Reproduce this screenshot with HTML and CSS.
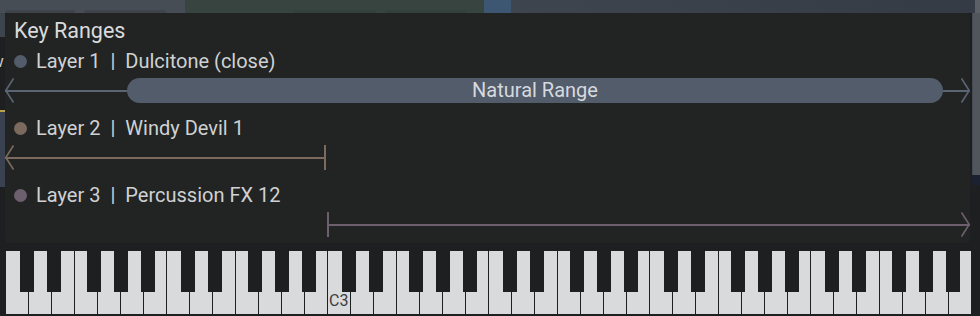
FILE: index.html
```html
<!DOCTYPE html>
<html lang="en">
<head>
    <meta charset="UTF-8" />
    <title>Key Ranges</title>
    <link rel="stylesheet" href="styles.css">
</head>
<body>
    <div class="screen">
        <div class="toolbar">
            <div class="tb tb-grey"><span class="tab tab-a"></span><span class="tab tab-b"></span></div>
            <div class="tb tb-green"><span class="tab tab-c"></span><span class="tab tab-b"></span></div>
            <div class="tb tb-blue"></div>
            <div class="tb tb-slate"></div>
            <div class="tb tb-edge"></div>
        </div>

        <div class="middle">
            <div class="side-left">
                <div class="sl-top"></div>
                <div class="sl-mid">w</div>
                <div class="sl-knob"></div>
            </div>

            <div class="key-ranges">
                <div class="title">Key Ranges</div>

                <!-- Layer 1 -->
                <div class="layer layer-1">
                    <div class="layer-head">
                        <span class="dot"></span>
                        <span>Layer 1</span><span class="sep">|</span><span>Dulcitone (close)</span>
                    </div>
                    <div class="track">
                        <div class="seg seg-l1">
                            <svg class="chev" width="9" height="25" viewBox="0 0 9 25"><polyline points="8.5,0.5 0.8,12.5 8.5,24.5" /></svg>
                        </div>
                        <div class="pill">Natural Range</div>
                        <div class="seg seg-r1">
                            <svg class="chev chev-r" width="9" height="25" viewBox="0 0 9 25"><polyline points="0.5,0.5 8.2,12.5 0.5,24.5" /></svg>
                        </div>
                    </div>
                </div>

                <!-- Layer 2 -->
                <div class="layer layer-2">
                    <div class="layer-head">
                        <span class="dot"></span>
                        <span>Layer 2</span><span class="sep">|</span><span>Windy Devil 1</span>
                    </div>
                    <div class="track">
                        <div class="seg seg-l2">
                            <svg class="chev" width="9" height="25" viewBox="0 0 9 25"><polyline points="8.5,0.5 0.8,12.5 8.5,24.5" /></svg>
                            <span class="bar bar-end"></span>
                        </div>
                    </div>
                </div>

                <!-- Layer 3 -->
                <div class="layer layer-3">
                    <div class="layer-head">
                        <span class="dot"></span>
                        <span>Layer 3</span><span class="sep">|</span><span>Percussion FX 12</span>
                    </div>
                    <div class="track">
                        <div class="gap-l3"></div>
                        <div class="seg seg-r3">
                            <span class="bar"></span>
                            <svg class="chev chev-r" width="9" height="25" viewBox="0 0 9 25"><polyline points="0.5,0.5 8.2,12.5 0.5,24.5" /></svg>
                        </div>
                    </div>
                </div>
            </div>

            <div class="side-right">
                <div class="scroll"></div>
                <div class="scroll-foot"></div>
            </div>
        </div>

        <div class="keyboard" id="keyboard"></div>
    </div>

    <script>
        // 6 octaves, starting at C1
        const keyboard = document.getElementById('keyboard');
        const blackOffsets = { 0: 14, 1: 18, 3: 12, 4: 16, 5: 20 };

        for (let i = 0; i < 42; i++) {
            const key = document.createElement('div');
            key.className = 'white-key';
            const step = i % 7;
            if (blackOffsets[step] !== undefined && i < 41) {
                const black = document.createElement('div');
                black.className = 'black-key black-' + step;
                key.appendChild(black);
            }
            if (i === 14) {
                const label = document.createElement('span');
                label.className = 'key-label';
                label.textContent = 'C3';
                key.appendChild(label);
            }
            keyboard.appendChild(key);
        }
    </script>
</body>
</html>
```

FILE: styles.css
```css
body {
    margin: 0;
    background: #1e1f21;
    font-family: Roboto, "Liberation Sans", sans-serif;
    overflow: hidden;
}

.screen {
    width: 980px;
    height: 316px;
}

/* backdrop behind the popup */
.toolbar {
    display: flex;
    height: 13px;
}

.tb {
    display: flex;
    gap: 9px;
    padding-left: 5px;
    box-sizing: border-box;
}

.tb-grey {
    width: 185px;
    background: #474d54;
}

.tb-green {
    width: 299px;
    padding-left: 108px;
    background: #37443f;
}

.tb-blue {
    width: 27px;
    background: #3d5672;
}

.tb-slate {
    width: 464px;
    background: linear-gradient(100deg, #3e454e, #353b44);
}

.tb-edge {
    width: 5px;
    background: #5b6066;
}

.tab {
    margin-top: 10px;
    height: 3px;
    border-radius: 4px 4px 0 0;
    background: #3e444a;
}

.tb-green .tab {
    background: #33403b;
}

.tab-a { width: 70px; }
.tab-b { width: 82px; }
.tab-c { width: 83px; }

.middle {
    display: flex;
    height: 230px;
}

.side-left {
    width: 5px;
    overflow: hidden;
}

.sl-top {
    height: 24px;
    background: #3e444b;
}

.sl-mid {
    height: 73px;
    font-size: 17px;
    line-height: 48px;
    color: #c8c8c8;
    text-indent: -9px;
}

.sl-knob {
    height: 75px;
    border-top: 2px solid #b8a24a;
    background: #3a4150;
}

.side-right {
    width: 10px;
    padding-left: 2px;
    box-sizing: border-box;
}

.scroll {
    height: 162px;
    background: #51565d;
    border-left: 1px solid #464b52;
}

.scroll-foot {
    height: 10px;
    background: #1b2131;
}

/* the popup */
.key-ranges {
    width: 965px;
    background: #222423;
    border-radius: 4px;
    padding-bottom: 6px;
    box-sizing: border-box;
    color: #cfd1d3;
}

.title {
    font-size: 21.5px;
    line-height: 35px;
    padding-left: 9px;
    color: #dadbdc;
}

.layer {
    margin-bottom: 12px;
}

.layer:last-child {
    margin-bottom: 0;
}

.layer-head {
    display: flex;
    align-items: center;
    height: 26px;
    padding-left: 9px;
    font-size: 20px;
}

.dot {
    width: 13px;
    height: 13px;
    border-radius: 50%;
    margin-right: 9px;
}

.sep {
    margin: 0 10px;
}

.layer-1 { color: #5a6574; }
.layer-2 { color: #7b6a5d; }
.layer-3 { color: #6e5f6e; }

.layer-head span:not(.dot) {
    color: #cfd1d3;
}

.layer-1 .dot { background: #525c6b; }
.layer-2 .dot { background: #7b6a5d; }
.layer-3 .dot { background: #6e5f6e; }

.track {
    display: flex;
    height: 25px;
    margin-top: 4px;
}

.seg {
    display: flex;
    justify-content: space-between;
    align-items: center;
    background: linear-gradient(currentColor, currentColor) center / 100% 2px no-repeat;
}

.chev polyline {
    fill: none;
    stroke: currentColor;
    stroke-width: 1.6;
}

.chev-r {
    margin-left: auto;
}

.bar {
    width: 2px;
    height: 25px;
    background: currentColor;
}

.seg-l1 { width: 122px; }
.seg-r1 { flex: 1; }
.seg-l2 { width: 321px; }
.gap-l3 { width: 322px; }
.seg-r3 { flex: 1; }

.pill {
    width: 816px;
    background: #525c6b;
    border-radius: 13px;
    text-align: center;
    font-size: 20px;
    line-height: 25px;
    color: #d6d9de;
}

/* keyboard */
.keyboard {
    display: flex;
    gap: 1px;
    margin: 8px 0 0 6px;
    height: 63px;
}

.white-key {
    position: relative;
    width: 22px;
    flex: none;
    background: #d9dadc;
}

.black-key {
    position: absolute;
    top: 0;
    width: 14px;
    height: 41px;
    background: #1e1f21;
    z-index: 1;
}

.black-0 { left: 14px; }
.black-1 { left: 18px; }
.black-3 { left: 12px; }
.black-4 { left: 16px; }
.black-5 { left: 20px; }

.key-label {
    position: absolute;
    left: 1px;
    bottom: 5px;
    font-size: 16px;
    line-height: 1;
    color: #3c3d3f;
}
```
